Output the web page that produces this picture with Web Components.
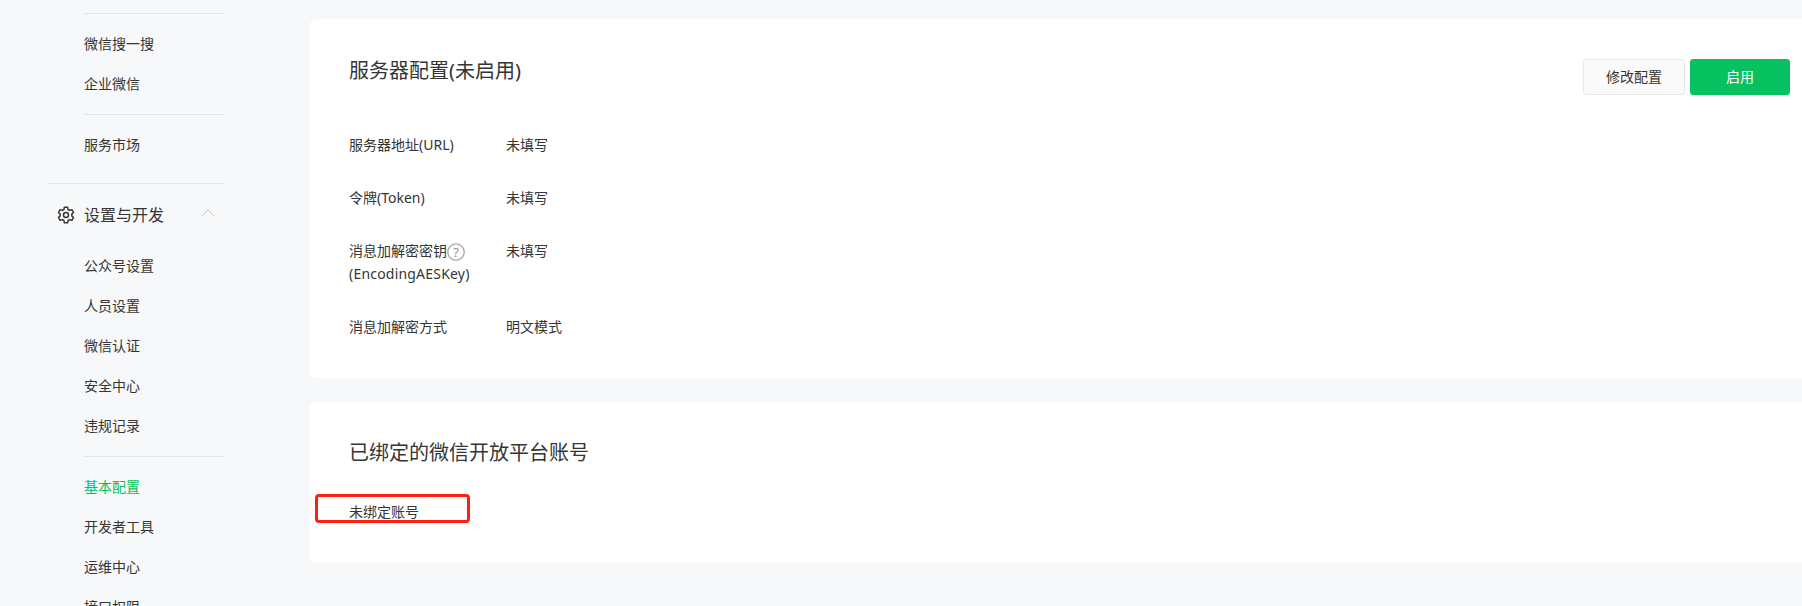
<!DOCTYPE html>
<html lang="zh"><head><meta charset="utf-8"><title>基本配置</title>
<style>
html,body{margin:0;height:606px;overflow:hidden;background:#f6f8f9}
body{font-family:"Noto Sans","Noto Sans CJK SC",sans-serif;color:#353535;font-size:14px}
</style></head><body>
<app-page>
<side-nav slot="nav">
  <nav-rule></nav-rule>
  <nav-item>微信搜一搜</nav-item>
  <nav-item>企业微信</nav-item>
  <nav-rule></nav-rule>
  <nav-item>服务市场</nav-item>
  <nav-group>设置与开发</nav-group>
  <nav-item>公众号设置</nav-item>
  <nav-item>人员设置</nav-item>
  <nav-item>微信认证</nav-item>
  <nav-item>安全中心</nav-item>
  <nav-item>违规记录</nav-item>
  <nav-rule></nav-rule>
  <nav-item active>基本配置</nav-item>
  <nav-item>开发者工具</nav-item>
  <nav-item>运维中心</nav-item>
  <nav-item>接口权限</nav-item>
</side-nav>
<config-card heading="服务器配置(未启用)" style="height:359px;padding-top:38px">
  <wx-button slot="actions">修改配置</wx-button>
  <wx-button slot="actions" primary>启用</wx-button>
  <info-row label="服务器地址(URL)">未填写</info-row>
  <info-row label="令牌(Token)">未填写</info-row>
  <info-row>
    <span slot="label">消息加解密密钥<help-icon></help-icon><br><span style="letter-spacing:.2px">(EncodingAESKey)</span></span>
    未填写
  </info-row>
  <info-row label="消息加解密方式">明文模式</info-row>
</config-card>
<config-card heading="已绑定的微信开放平台账号" compact style="height:161px">
  <marked-text>未绑定账号</marked-text>
</config-card>
</app-page>
<script>
function def(name, css, html){
  customElements.define(name, class extends HTMLElement{
    connectedCallback(){
      if(this.shadowRoot) return;
      const r=this.attachShadow({mode:'open'});
      r.innerHTML='<style>'+css+'</style>'+(typeof html==='function'?html(this):html);
    }
  });
}
def('app-page',
 `:host{display:flex;width:1802px;height:606px;overflow:hidden}
  .nav{flex:0 0 309px}
  .main{flex:1;min-width:0;display:flex;flex-direction:column;gap:24px;padding-top:19px}`,
 `<div class="nav"><slot name="nav"></slot></div><div class="main"><slot></slot></div>`);
def('side-nav',
 `:host{display:flex;flex-direction:column;padding:13px 0 0 48px;width:177px}`,
 `<slot></slot>`);
def('nav-rule',
 `:host{display:block;height:1px;background:#e5e6ea;margin:0 0 10px 36px;flex:none}
  :host(:not(:first-child)){margin-top:10px}`,``);
def('nav-item',
 `:host{display:block;height:40px;line-height:40px;padding-left:36px;font-size:14px;color:#353535;white-space:nowrap;flex:none}
  :host([active]){color:#07c160}`,
 `<slot></slot>`);
def('nav-group',
 `:host{display:flex;align-items:center;flex:none;box-sizing:border-box;height:63px;margin-top:18px;border-top:1px solid #e5e6ea;font-size:16px;color:#353535}
  .g{width:18px;height:18px;margin:0 9px;flex:none;display:block}
  .t{flex:1;line-height:24px}
  .c{width:14px;height:8px;margin:-4px 10px 0 0;flex:none;display:block}`,
 `<svg class="g" viewBox="0 0 18 18" fill="none" stroke="#353535" stroke-width="1.5" stroke-linejoin="round"><path d="M7.4 1.2h3.2l.5 2.3 1.5.9 2.3-.7 1.6 2.8-1.7 1.6v1.8l1.7 1.6-1.6 2.8-2.3-.7-1.5.9-.5 2.3H7.4l-.5-2.3-1.5-.9-2.3.7-1.6-2.8 1.7-1.6V8.1L1.5 6.5l1.6-2.8 2.3.7 1.5-.9z"/><circle cx="9" cy="9" r="2.5"/></svg><span class="t"><slot></slot></span><svg class="c" viewBox="0 0 14 8" fill="none" stroke="#c4c4c4" stroke-width="1"><path d="M.5 7.5 7 .8l6.5 6.7"/></svg>`);
def('config-card',
 `:host{display:block;position:relative;box-sizing:border-box;background:#fff;border-radius:8px 0 0 8px;padding:37px 0 0 40px;flex:none}
  h2{margin:0;font-weight:400;font-size:20px;line-height:28px;color:#353535}
  .actions{position:absolute;top:40px;right:12px;display:flex;gap:5px}
  .body{margin-top:48px}
  :host([compact]) .body{margin-top:34px}`,
 h=>`<h2>${h.getAttribute('heading')}</h2><div class="actions"><slot name="actions"></slot></div><div class="body"><slot></slot></div>`);
def('info-row',
 `:host{display:flex;font-size:14px;line-height:23px;color:#353535;margin-bottom:30px}
  .l{flex:0 0 157px;white-space:nowrap}`,
 h=>`<div class="l"><slot name="label">${h.getAttribute('label')||''}</slot></div><div><slot></slot></div>`);
def('help-icon',
 `:host{display:inline-block;width:18px;height:18px;vertical-align:-5px}
  svg{display:block}
  text{font:13px "Noto Sans",sans-serif;fill:#8f8f8f}`,
 `<svg width="18" height="18" viewBox="0 0 18 18"><circle cx="9" cy="9" r="8.2" fill="none" stroke="#a8a8a8" stroke-width="1.3"/><text x="9" y="13.6" text-anchor="middle">?</text></svg>`);
def('wx-button',
 `:host{display:block;box-sizing:border-box;width:102px;height:36px;line-height:34px;text-align:center;font-size:14px;border:1px solid #e7e7e7;border-radius:3px;background:#fafafa;color:#353535}
  :host([primary]){width:100px;background:#07c160;border-color:#07c160;color:#fff}`,
 `<slot></slot>`);
def('marked-text',
 `:host{display:inline-block;position:relative;font-size:14px;line-height:22px;color:#353535}
  .m{position:absolute;left:-34px;top:-7px;width:155px;height:29px;box-sizing:border-box;border:3px solid #fb2014;border-radius:4px}`,
 `<slot></slot><div class="m"></div>`);
</script>
</body></html>
